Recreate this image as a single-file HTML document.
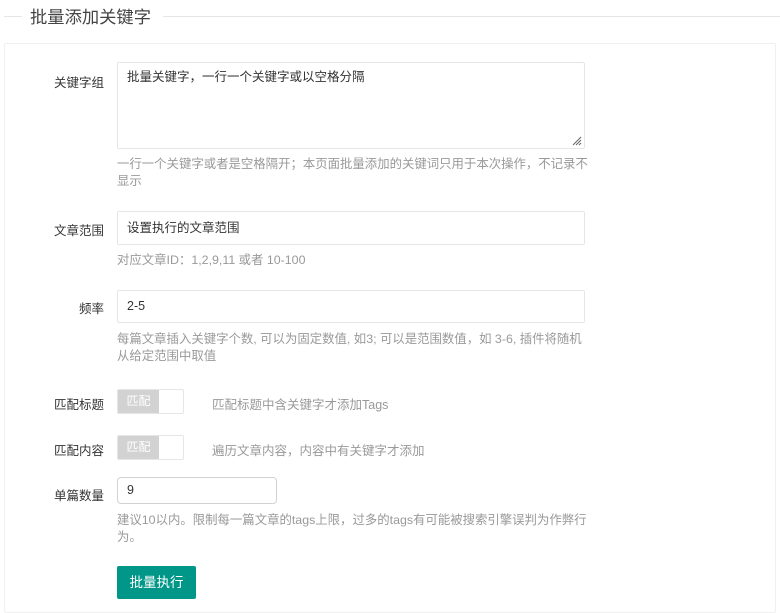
<!DOCTYPE html>
<html><head><meta charset="utf-8"><style>
*{box-sizing:border-box;margin:0;padding:0}
body{width:780px;height:603px;background:#fff;font-family:"Liberation Sans","Noto Sans CJK SC",sans-serif;font-size:12.5px;color:#333;position:relative;overflow:hidden}
.a{position:absolute}
.line{height:1px;background:#e6e6e6}
.lbl{right:676px;text-align:right;color:#333;font-size:12.5px;white-space:nowrap}
.in{left:117px;width:468px;border:1px solid #e6e6e6;border-radius:2px;padding-left:9px;color:#333;font-size:12.5px}
.help{left:117px;width:472px;color:#999;font-size:12.4px;line-height:17px}
.sw{left:117px;width:67px;height:25px;border:1px solid #e6e6e6;border-radius:2px}
.sw span{position:absolute;left:0;top:0;width:41px;height:23px;background:#d2d2d2;color:#fff;font-size:12px;line-height:23px;text-align:center}
</style></head><body>
<div class="a line" style="left:4px;top:16px;width:18px"></div>
<div class="a line" style="left:163px;top:16px;width:617px"></div>
<div class="a" style="left:30px;top:6px;font-size:17.3px;color:#444;line-height:22px">批量添加关键字</div>
<div class="a" style="left:4px;top:43px;width:772px;height:570px;border:1px solid #f0f0f0;border-radius:2px"></div>

<div class="a lbl" style="top:72px">关键字组</div>
<div class="a in" style="top:62px;height:87px;padding-top:6px;line-height:17px">批量关键字，一行一个关键字或以空格分隔
<svg class="a" style="right:2px;bottom:2px" width="10" height="10"><path d="M9 1L1 9M9 4L4 9M9 7L7 9" stroke="#666" stroke-width="1"/></svg></div>
<div class="a help" style="top:156px">一行一个关键字或者是空格隔开；本页面批量添加的关键词只用于本次操作，不记录不显示</div>

<div class="a lbl" style="top:220px">文章范围</div>
<div class="a in" style="top:211px;height:34px;line-height:32px">设置执行的文章范围</div>
<div class="a help" style="top:252px">对应文章ID：1,2,9,11 或者 10-100</div>

<div class="a lbl" style="top:298px">频率</div>
<div class="a in" style="top:290px;height:33px;line-height:31px">2-5</div>
<div class="a help" style="top:331px">每篇文章插入关键字个数, 可以为固定数值, 如3; 可以是范围数值，如 3-6, 插件将随机从给定范围中取值</div>

<div class="a lbl" style="top:394px">匹配标题</div>
<div class="a sw" style="top:389px"><span>匹配</span></div>
<div class="a" style="left:212px;top:394px;color:#999">匹配标题中含关键字才添加Tags</div>

<div class="a lbl" style="top:440px">匹配内容</div>
<div class="a sw" style="top:435px"><span>匹配</span></div>
<div class="a" style="left:212px;top:440px;color:#999">遍历文章内容，内容中有关键字才添加</div>

<div class="a lbl" style="top:485px">单篇数量</div>
<div class="a in" style="top:477px;width:160px;height:27px;line-height:25px;border-color:#d2d2d2;border-radius:4px">9</div>
<div class="a help" style="top:512px">建议10以内。限制每一篇文章的tags上限，过多的tags有可能被搜索引擎误判为作弊行为。</div>

<div class="a" style="left:117px;top:566px;width:79px;height:33px;background:#009688;color:#fff;border-radius:2px;text-align:center;line-height:33px;font-size:13.5px">批量执行</div>
</body></html>
